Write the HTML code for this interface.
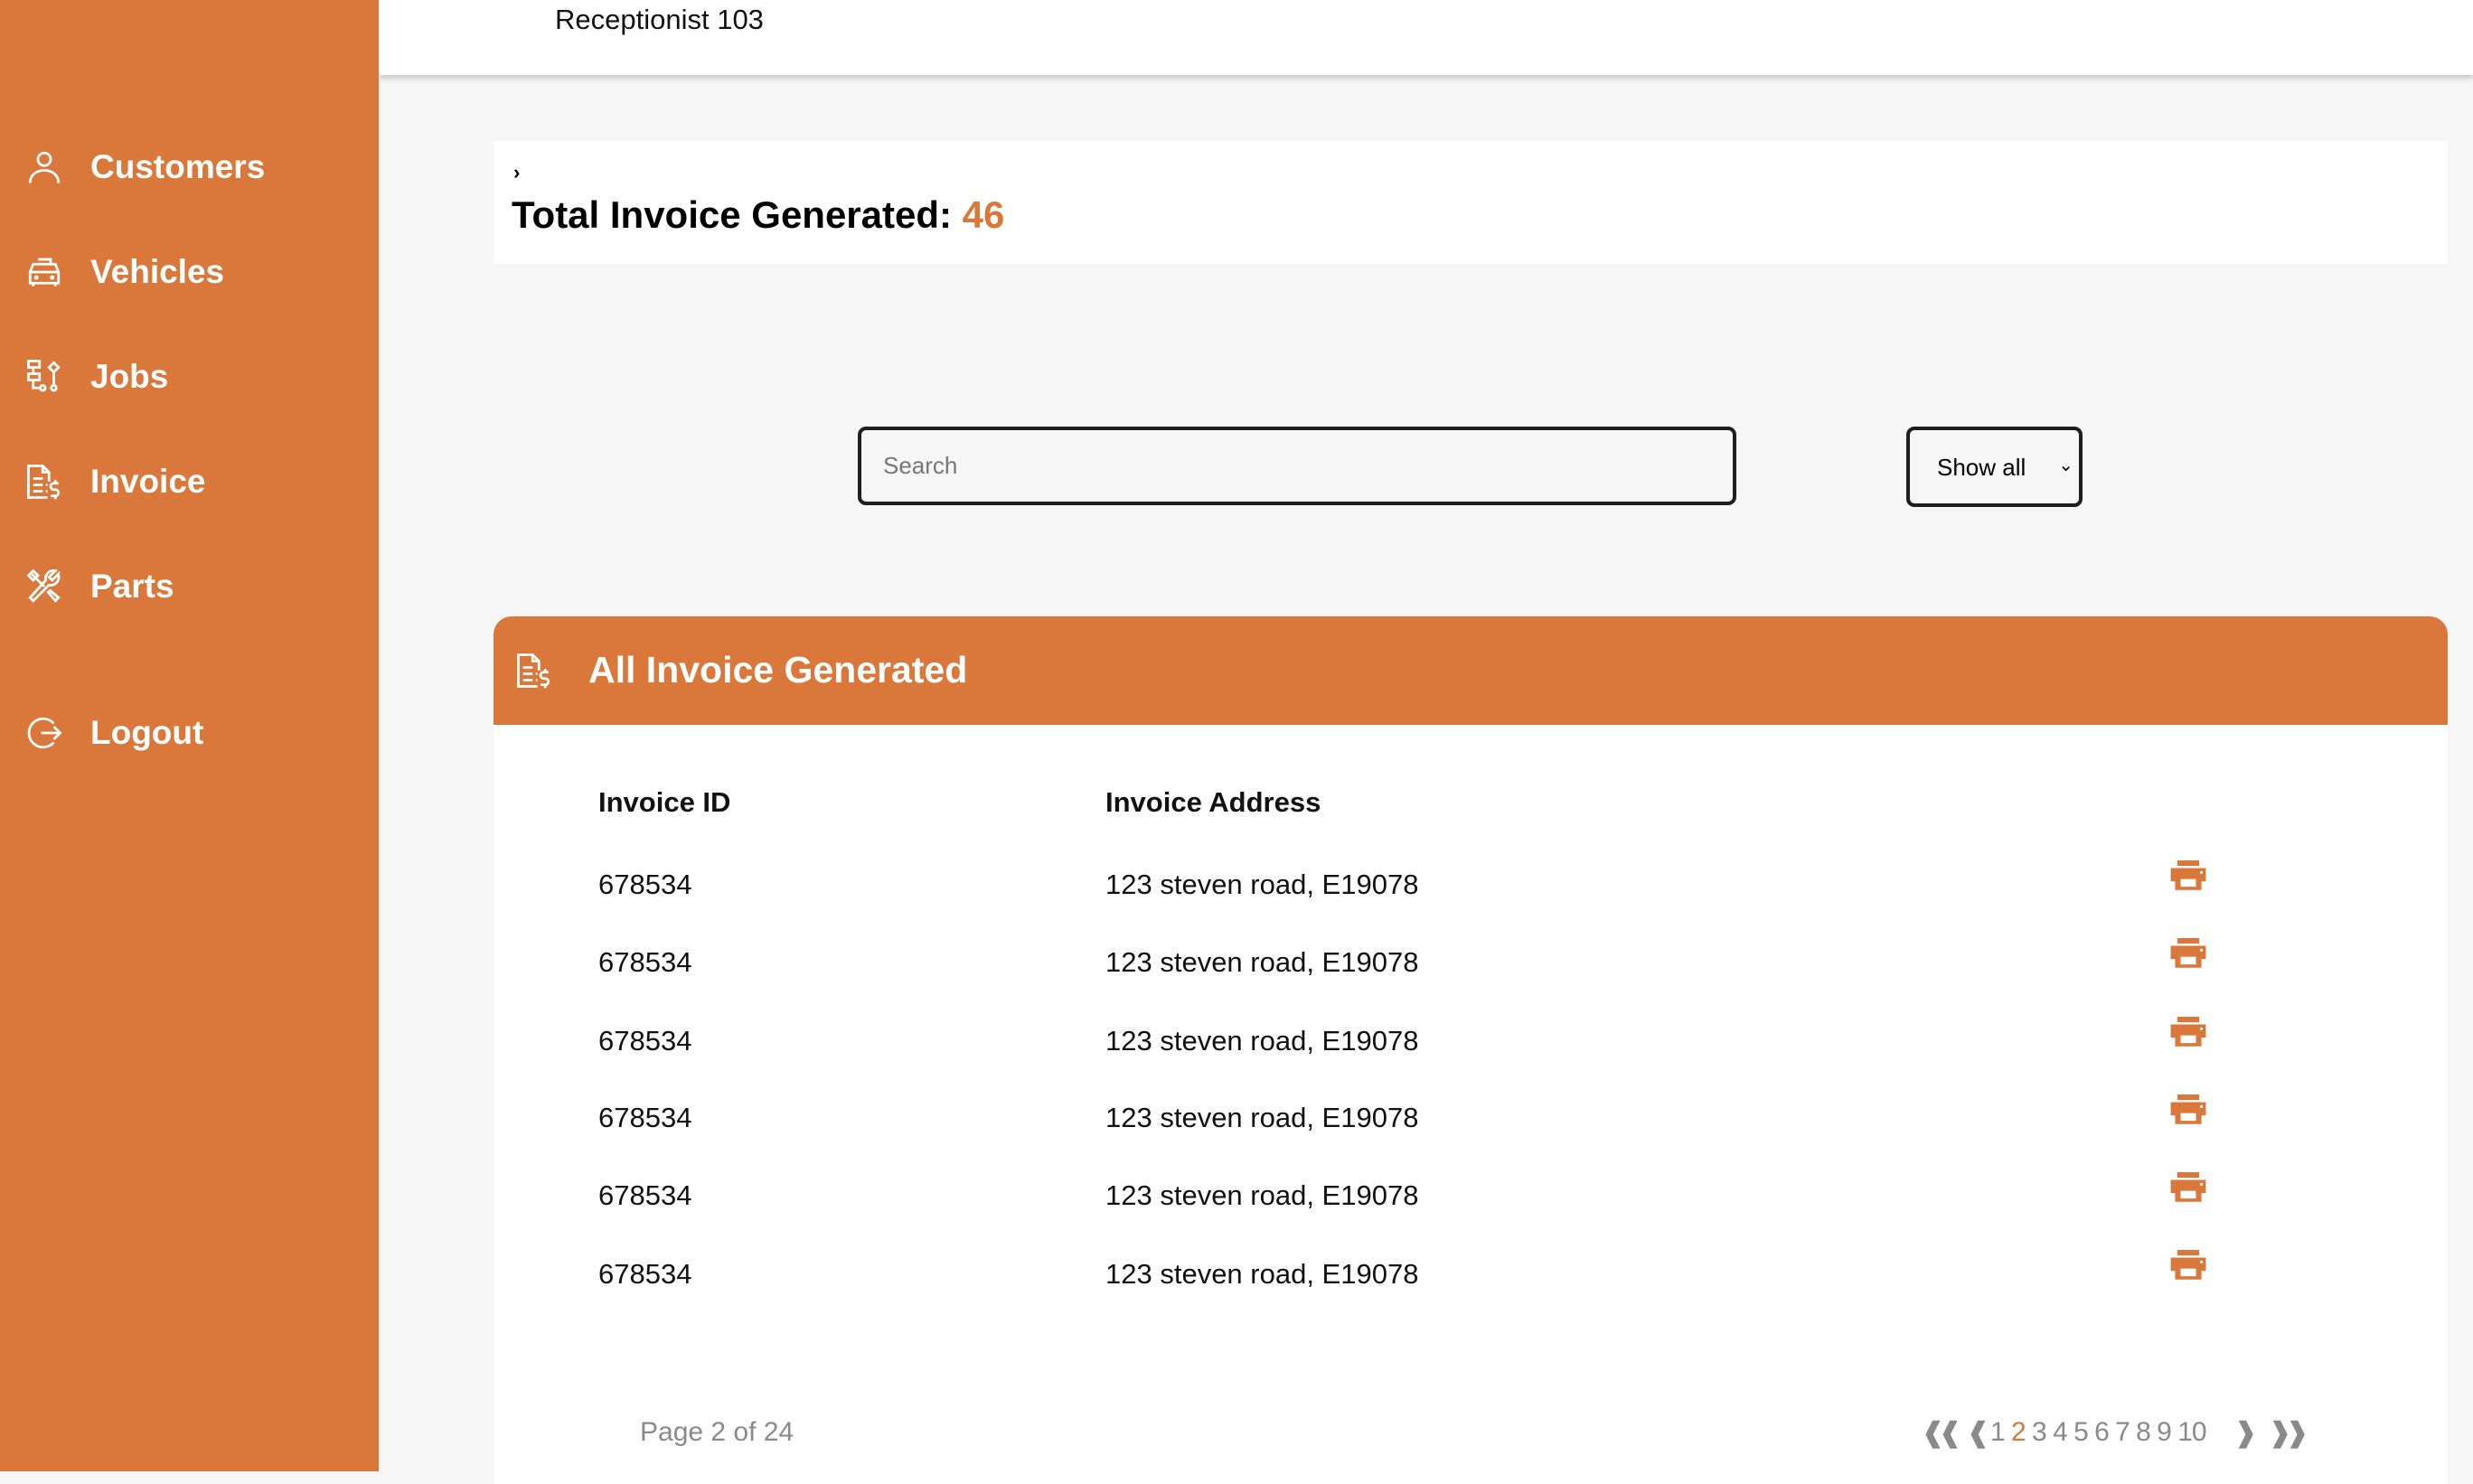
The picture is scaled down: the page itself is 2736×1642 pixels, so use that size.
<!DOCTYPE html>
<html><head><meta charset="utf-8"><style>
*{margin:0;padding:0;box-sizing:border-box}
body{width:2736px;height:1628px;background:#f6f6f6;font-family:"Liberation Sans",Arial,sans-serif;position:relative;overflow:hidden}
.side{position:absolute;left:0;top:0;width:419px;height:1628px;background:#d9783a;z-index:2}
.nav{position:absolute;left:28px;display:flex;align-items:center;color:#fff;font-size:37px;font-weight:bold}
.nav svg{width:42px;height:42px;margin-right:30px;fill:none;stroke:#fff;stroke-width:1.6}
.top{position:absolute;left:419px;top:0;right:0;height:83px;background:#fff;box-shadow:0 4px 6px rgba(0,0,0,.18)}
.top span{position:absolute;left:195px;top:4px;font-size:31px;color:#111}
.card1{position:absolute;left:546px;top:156px;width:2162px;height:136px;background:#fff}
.a{position:absolute;left:22px;top:22px;font-size:22px;font-weight:bold}
.t{position:absolute;left:20px;top:58px;font-size:42px;font-weight:bold;color:#000}
.t b{color:#d9783a}
.search{position:absolute;left:949px;top:472px;width:972px;height:87px;border:4px solid #1e1e1e;border-radius:9px;font-size:26px;color:#777;padding:24px 24px}
.sel{position:absolute;left:2109px;top:472px;width:195px;height:89px;border:4px solid #1e1e1e;border-radius:9px;font-size:26px;color:#000;padding:26px 30px}
.sel i{position:absolute;right:6px;top:26px;font-style:normal;font-size:20px}
.card{position:absolute;left:546px;top:682px;width:2162px;height:960px;background:#fff;border-radius:20px 20px 0 0;overflow:hidden}
.hd{height:120px;background:#d9783a;position:relative}
.hd span{position:absolute;left:105px;top:36px;color:#fff;font-size:41px;font-weight:bold}
.hd svg{position:absolute;left:24px;top:39px;width:42px;height:42px;fill:none;stroke:#fff;stroke-width:1.6}
.row{position:absolute;left:116px;font-size:31px;color:#111}
.row .c2{position:absolute;left:561px;white-space:nowrap}
.pr{position:absolute;left:1855px;width:40px;height:34px}
.pg{position:absolute;top:1568px;font-size:30px;color:#8a8a8a}
</style></head><body>
<div class="side">
 <div class="nav" style="top:164px"><svg viewBox="0 0 24 24"><circle cx="12" cy="7" r="4"/><path d="M3 22c0-5 4-8 9-8s9 3 9 8"/></svg>Customers</div>
 <div class="nav" style="top:280px"><svg viewBox="0 0 24 24"><path d="M8 4h8v3M3 12l2-5h14l2 5v7H3z M5 19v2M19 19v2M3 12h18"/><circle cx="7" cy="15.5" r=".6"/><circle cx="17" cy="15.5" r=".6"/></svg>Vehicles</div>
 <div class="nav" style="top:396px"><svg viewBox="0 0 24 24"><path d="M2 2h7v4H2zM5 6v4M2 10h7v4H2zM5 14v5h4M18 3l3 3-3 3-3-3zM18 9v8"/><circle cx="11" cy="19" r="1.6"/><circle cx="18" cy="19" r="1.6"/></svg>Jobs</div>
 <div class="nav" style="top:512px"><svg viewBox="0 0 24 24"><path d="M14 22H2V2h9l4 4v6M11 2v4h4M5 10h6M5 14h6M5 18h6M13 14h1M13 18h1M21 13h-3a2 2 0 0 0 0 4h1a2 2 0 0 1 0 4h-3M19 11v2M19 21v2"/></svg>Invoice</div>
 <div class="nav" style="top:628px"><svg viewBox="0 0 24 24"><path d="M3 3l9 9M2 5l3-3 3 3-3 3zM21 4l-4 4-2-2 4-4a5 5 0 0 0-6 6L3 19l2 2 10-10a5 5 0 0 0 6-6zM14 15l5 6 2-2-6-5"/></svg>Parts</div>
 <div class="nav" style="top:790px"><svg viewBox="0 0 24 24"><path d="M18 6a9 9 0 1 0 0 12M10 12h12M18 8l4 4-4 4"/></svg>Logout</div>
</div>
<div class="top"><span>Receptionist 103</span></div>
<div class="card1"><div class="a">›</div><div class="t">Total Invoice Generated: <b>46</b></div></div>
<div class="search">Search</div>
<div class="sel">Show all<i>⌄</i></div>
<div class="card">
 <div class="hd"><svg viewBox="0 0 24 24"><path d="M14 22H2V2h9l4 4v6M11 2v4h4M5 10h6M5 14h6M5 18h6M13 14h1M13 18h1M21 13h-3a2 2 0 0 0 0 4h1a2 2 0 0 1 0 4h-3M19 11v2M19 21v2"/></svg><span>All Invoice Generated</span></div>
 <div class="row" style="top:188px;font-weight:bold">Invoice ID<span class="c2">Invoice Address</span></div>
 <div class="row" style="top:279px">678534<span class="c2">123 steven road, E19078</span></div>
 <div class="row" style="top:365px">678534<span class="c2">123 steven road, E19078</span></div>
 <div class="row" style="top:452px">678534<span class="c2">123 steven road, E19078</span></div>
 <div class="row" style="top:537px">678534<span class="c2">123 steven road, E19078</span></div>
 <div class="row" style="top:623px">678534<span class="c2">123 steven road, E19078</span></div>
 <div class="row" style="top:710px">678534<span class="c2">123 steven road, E19078</span></div>
 <svg class="pr" style="top:270px" viewBox="0 0 32 28"><rect x="6" y="0" width="20" height="5" fill="#d9783a"/><path d="M0 7h32v12h-4v8H4v-8H0z" fill="#d9783a"/><rect x="9" y="17" width="14" height="7" fill="#fff"/><circle cx="28" cy="11" r="1.3" fill="#fff"/></svg>
 <svg class="pr" style="top:356px" viewBox="0 0 32 28"><rect x="6" y="0" width="20" height="5" fill="#d9783a"/><path d="M0 7h32v12h-4v8H4v-8H0z" fill="#d9783a"/><rect x="9" y="17" width="14" height="7" fill="#fff"/><circle cx="28" cy="11" r="1.3" fill="#fff"/></svg>
 <svg class="pr" style="top:443px" viewBox="0 0 32 28"><rect x="6" y="0" width="20" height="5" fill="#d9783a"/><path d="M0 7h32v12h-4v8H4v-8H0z" fill="#d9783a"/><rect x="9" y="17" width="14" height="7" fill="#fff"/><circle cx="28" cy="11" r="1.3" fill="#fff"/></svg>
 <svg class="pr" style="top:529px" viewBox="0 0 32 28"><rect x="6" y="0" width="20" height="5" fill="#d9783a"/><path d="M0 7h32v12h-4v8H4v-8H0z" fill="#d9783a"/><rect x="9" y="17" width="14" height="7" fill="#fff"/><circle cx="28" cy="11" r="1.3" fill="#fff"/></svg>
 <svg class="pr" style="top:615px" viewBox="0 0 32 28"><rect x="6" y="0" width="20" height="5" fill="#d9783a"/><path d="M0 7h32v12h-4v8H4v-8H0z" fill="#d9783a"/><rect x="9" y="17" width="14" height="7" fill="#fff"/><circle cx="28" cy="11" r="1.3" fill="#fff"/></svg>
 <svg class="pr" style="top:701px" viewBox="0 0 32 28"><rect x="6" y="0" width="20" height="5" fill="#d9783a"/><path d="M0 7h32v12h-4v8H4v-8H0z" fill="#d9783a"/><rect x="9" y="17" width="14" height="7" fill="#fff"/><circle cx="28" cy="11" r="1.3" fill="#fff"/></svg>
</div>
<div class="pg" style="left:708px">Page 2 of 24</div>
<div class="pg" style="left:2126px;font-weight:bold;letter-spacing:-6px">❰❰</div>
<div class="pg" style="left:2176px;font-weight:bold">❰</div>
<div class="pg" style="left:2202px;letter-spacing:-1px">1 <span style="color:#d9783a">2</span> 3 4 5 6 7 8 9 10</div>
<div class="pg" style="left:2472px;font-weight:bold">❱</div>
<div class="pg" style="left:2510px;font-weight:bold;letter-spacing:-6px">❱❱</div>
</body></html>
